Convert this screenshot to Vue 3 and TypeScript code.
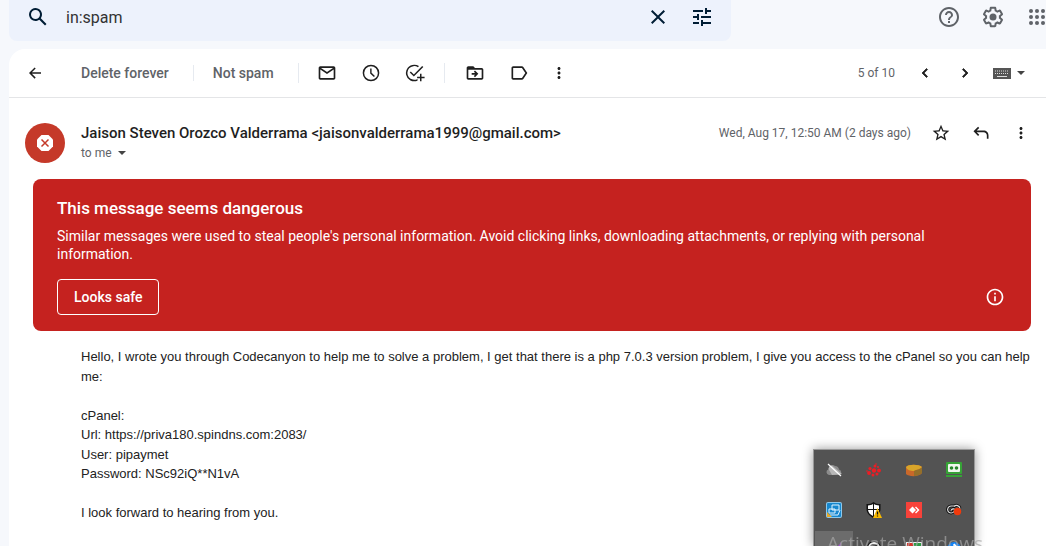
<script setup lang="ts">
import { ref } from 'vue'

interface Action {
  label: string
  path: string
}

const query = ref('in:spam')

const markActions: Action[] = [
  { label: 'Mark as unread', path: 'M20 4H4c-1.100 0-2 .9-2 2v12c0 1.100.9 2 2 2h16c1.100 0 2-.9 2-2V6c0-1.100-.9-2-2-2zm-.8 2L12 10.800 4.800 6h14.400zM4 18V7.870l8 5.330 8-5.330V18H4z' },
  { label: 'Snooze', path: 'M12 2a10 10 0 1 0 0 20 10 10 0 0 0 0-20zm0 18.200a8.200 8.200 0 1 1 0-16.400 8.200 8.200 0 0 1 0 16.400zM12.700 6.500H11v6l4.500 4.300 1.200-1.200-4-3.800z' },
  { label: 'Add to Tasks', path: 'M11 2a10 10 0 1 0 4 19.200v-2.100A8.200 8.200 0 1 1 15.500 5l1.300-1.300A10 10 0 0 0 11 2zM20.600 3.500l-10 10.200-3.600-3.600-1.300 1.300 4.900 4.900L22 4.900zM18 13v3.500h-3.500v1.800H18V22h1.800v-3.700h3.700v-1.800h-3.700V13z' },
]

const moveActions: Action[] = [
  { label: 'Move to', path: 'M20 6h-8l-2-2H4c-1.100 0-2 .9-2 2v12c0 1.100.9 2 2 2h16c1.100 0 2-.9 2-2V8c0-1.100-.9-2-2-2zm0 12H4V8h16v10zM12.160 12H8v2h4.160l-1.590 1.590L11.990 17 16 13.010 11.990 9l-1.410 1.410L12.160 12z' },
  { label: 'Labels', path: 'M3 6v12c0 1.100.9 2 2 2h10.500c.7 0 1.300-.3 1.700-.9L22 12l-4.800-7.100c-.4-.6-1-.9-1.700-.9H5c-1.100 0-2 .9-2 2zm2 0h10.500l4.100 6-4.100 6H5V6z' },
]

const more = 'M12 8c1.100 0 2-.9 2-2s-.9-2-2-2-2 .9-2 2 .9 2 2 2zm0 2c-1.100 0-2 .9-2 2s.9 2 2 2 2-.9 2-2-.9-2-2-2zm0 6c-1.100 0-2 .9-2 2s.9 2 2 2 2-.9 2-2-.9-2-2-2z'
const gridDots = [6, 12, 18]
</script>

<template>
  <div class="page">
    <header class="top">
      <form class="search" @submit.prevent>
        <button class="icon-btn wide" type="submit" aria-label="Search">
          <svg class="i24" viewBox="0 0 24 24"><path d="M20.500 19 14.800 13.300A6.500 6.500 0 1 0 13.300 14.800L19 20.500zM9.500 14a4.500 4.500 0 1 1 0-9 4.500 4.500 0 0 1 0 9z" /></svg>
        </button>
        <input v-model="query" class="query" type="text" aria-label="Search mail" />
        <button class="icon-btn" type="button" aria-label="Clear search">
          <svg class="i24" viewBox="0 0 24 24"><path d="M19 6.400 17.600 5 12 10.600 6.400 5 5 6.400l5.600 5.600L5 17.600 6.400 19l5.600-5.600 5.600 5.600 1.400-1.400-5.600-5.600z" /></svg>
        </button>
        <button class="icon-btn" type="button" aria-label="Show search options">
          <svg class="i24" viewBox="0 0 24 24"><path d="M3 17v2h6v-2H3zM3 5v2h10V5H3zm10 16v-2h8v-2h-8v-2h-2v6h2zM7 9v2H3v2h4v2h2V9H7zm14 4v-2H11v2h10zm-6-4h2V7h4V5h-4V3h-2v6z" /></svg>
        </button>
      </form>
      <nav class="top-icons">
        <button class="icon-btn" type="button" aria-label="Support">
          <svg class="i24" viewBox="0 0 24 24"><path d="M11 18h2v-2h-2v2zm1-16C6.480 2 2 6.480 2 12s4.480 10 10 10 10-4.480 10-10S17.520 2 12 2zm0 18c-4.410 0-8-3.590-8-8s3.590-8 8-8 8 3.590 8 8-3.590 8-8 8zm0-14c-2.210 0-4 1.790-4 4h2c0-1.100.9-2 2-2s2 .9 2 2c0 2-3 1.750-3 5h2c0-2.250 3-2.500 3-5 0-2.210-1.790-4-4-4z" /></svg>
        </button>
        <button class="icon-btn" type="button" aria-label="Settings">
          <svg class="i24" viewBox="0 0 24 24">
            <path d="M13.850 22.250h-3.700c-.74 0-1.360-.54-1.450-1.270l-.27-1.890c-.27-.14-.53-.29-.79-.46l-1.800.72c-.7.26-1.470-.03-1.810-.65L2.200 15.530c-.35-.66-.2-1.440.36-1.880l1.530-1.190c-.01-.15-.02-.3-.02-.46 0-.15.01-.31.02-.46l-1.520-1.190c-.59-.45-.74-1.260-.37-1.880l1.850-3.190c.34-.62 1.110-.9 1.790-.63l1.810.73c.26-.17.520-.32.780-.46l.27-1.910c.09-.7.710-1.250 1.440-1.250h3.700c.74 0 1.360.54 1.450 1.270l.27 1.890c.27.14.53.29.79.46l1.800-.72c.71-.26 1.480.03 1.820.65l1.840 3.180c.36.66.2 1.440-.36 1.880l-1.520 1.190c.01.15.02.3.02.46s-.01.31-.02.46l1.520 1.190c.56.45.72 1.230.37 1.860l-1.860 3.220c-.34.62-1.110.9-1.800.63l-1.800-.72c-.26.17-.52.32-.78.46l-.27 1.910c-.1.680-.72 1.220-1.460 1.220zm-3.230-2h2.760l.37-2.550.53-.22c.44-.18.88-.44 1.340-.78l.45-.34 2.380.96 1.380-2.400-2.030-1.580.07-.56c.03-.26.06-.51.06-.78s-.03-.53-.06-.78l-.07-.56 2.030-1.580-1.390-2.400-2.390.96-.45-.35c-.42-.32-.87-.58-1.330-.77l-.52-.22-.37-2.550h-2.760l-.37 2.550-.53.21c-.44.19-.88.44-1.340.79l-.45.33-2.380-.95-1.390 2.390 2.030 1.580-.07.560a7 7 0 0 0-.06.79c0 .26.02.53.06.78l.07.56-2.030 1.580 1.380 2.400 2.390-.96.45.35c.43.33.86.58 1.330.77l.53.22z" />
            <circle cx="12" cy="12" r="3.500" />
          </svg>
        </button>
        <button class="icon-btn" type="button" aria-label="Google apps">
          <svg class="i24" viewBox="0 0 24 24">
            <template v-for="y in gridDots" :key="y">
              <circle v-for="x in gridDots" :key="x" :cx="x" :cy="y" r="2" />
            </template>
          </svg>
        </button>
      </nav>
    </header>

    <main class="card">
      <div class="toolbar" role="toolbar" aria-label="Message actions">
        <button class="icon-btn" type="button" aria-label="Back to Spam">
          <svg class="i18" viewBox="0 0 24 24"><path d="M20 11H7.830l5.090-5.090L11.500 4.500 4 12l7.500 7.500 1.420-1.410L7.830 13H20z" /></svg>
        </button>
        <button class="text-btn delete" type="button">Delete forever</button>
        <button class="text-btn" type="button">Not spam</button>
        <div class="group">
          <button v-for="a in markActions" :key="a.label" class="icon-btn" type="button" :aria-label="a.label">
            <svg class="i20" viewBox="0 0 24 24"><path :d="a.path" /></svg>
          </button>
        </div>
        <div class="group">
          <button v-for="a in moveActions" :key="a.label" class="icon-btn" type="button" :aria-label="a.label">
            <svg class="i20" viewBox="0 0 24 24"><path :d="a.path" /></svg>
          </button>
          <button class="icon-btn narrow" type="button" aria-label="More">
            <svg class="i18" viewBox="0 0 24 24"><path :d="more" /></svg>
          </button>
        </div>
        <span class="count">5 of 10</span>
        <button class="icon-btn mid" type="button" aria-label="Newer">
          <svg class="i18" viewBox="0 0 24 24"><path d="M15.400 7.400 14 6l-6 6 6 6 1.400-1.400L10.800 12z" stroke="currentColor" /></svg>
        </button>
        <button class="icon-btn mid" type="button" aria-label="Older">
          <svg class="i18" viewBox="0 0 24 24"><path d="M8.600 16.600 10 18l6-6-6-6-1.400 1.400 4.600 4.600z" stroke="currentColor" /></svg>
        </button>
        <button class="keyboard" type="button" aria-label="Input tools">
          <svg class="kbd" viewBox="0 0 18 12">
            <rect width="18" height="11" y="1" fill="#555" />
            <path d="M2 4h14M2 6.500h14" stroke="#ddd" stroke-width="1" stroke-dasharray="1 1" />
            <path d="M4 9.500h10" stroke="#ddd" />
          </svg>
          <svg class="caret" viewBox="0 0 8 4"><path d="M0 0h8L4 4z" /></svg>
        </button>
      </div>

      <article>
        <div class="sender">
          <svg class="avatar" viewBox="0 0 40 40" role="img" aria-label="Dangerous sender">
            <circle cx="20" cy="20" r="20" fill="#c53929" />
            <path d="M16.500 12h7l4.500 4.500v7L23.500 28h-7L12 23.500v-7z" fill="#fff" />
            <path d="m16.500 16.500 7 7m0-7-7 7" stroke="#c53929" stroke-width="1.500" />
          </svg>
          <div class="who">
            <h1 class="name">Jaison Steven Orozco Valderrama &lt;jaisonvalderrama1999@gmail.com&gt;</h1>
            <button class="to" type="button">to me
              <svg class="caret" viewBox="0 0 8 4"><path d="M0 0h8L4 4z" /></svg>
            </button>
          </div>
          <time class="date" datetime="2022-08-17T00:50">Wed, Aug 17, 12:50 AM (2 days ago)</time>
          <div class="sender-actions">
            <button class="icon-btn mid" type="button" aria-label="Star">
              <svg class="i20" viewBox="0 0 24 24"><path d="m22 9.240-7.190-.62L12 2 9.190 8.630 2 9.240l5.460 4.730L5.820 21 12 17.270 18.180 21l-1.630-7.030L22 9.240zM12 15.400l-3.760 2.270 1-4.280-3.320-2.880 4.380-.38L12 6.100l1.710 4.040 4.380.38-3.320 2.880 1 4.280L12 15.400z" /></svg>
            </button>
            <button class="icon-btn mid" type="button" aria-label="Reply">
              <svg class="i20" viewBox="0 0 24 24"><path d="M8.500 4.500 3 10l5.500 5.500 1.400-1.400L6.800 11H15c2.500 0 4 1.500 4 4v4h2v-4c0-3.600-2.400-6-6-6H6.800l3.100-3.100z" /></svg>
            </button>
            <button class="icon-btn mid" type="button" aria-label="More">
              <svg class="i18" viewBox="0 0 24 24"><path :d="more" /></svg>
            </button>
          </div>
        </div>

        <section class="banner">
          <h2>This message seems dangerous</h2>
          <p>Similar messages were used to steal people's personal information. Avoid clicking links, downloading attachments, or replying with personal information.</p>
          <div class="banner-foot">
            <button class="safe" type="button">Looks safe</button>
            <button class="info" type="button" aria-label="Why this message is marked as dangerous">
              <svg class="i20" viewBox="0 0 24 24"><path d="M11 7h2v2h-2zm0 4h2v6h-2zm1-9C6.480 2 2 6.480 2 12s4.480 10 10 10 10-4.480 10-10S17.520 2 12 2zm0 18c-4.410 0-8-3.590-8-8s3.590-8 8-8 8 3.590 8 8-3.590 8-8 8z" /></svg>
            </button>
          </div>
        </section>

        <div class="message">
          <p>Hello, I wrote you through Codecanyon to help me to solve a problem, I get that there is a php 7.0.3 version problem, I give you access to the cPanel so you can help me:</p>
          <p>cPanel:<br />Url: https://priva180.spindns.com:2083/<br />User: pipaymet<br />Password: NSc92iQ**N1vA</p>
          <p>I look forward to hearing from you.</p>
        </div>
      </article>
    </main>

    <aside class="tray" aria-label="Hidden notification icons">
      <span class="cell"><svg viewBox="0 0 16 16">
        <path d="M3 13a3 3 0 0 1-.5-5.800A4 4 0 0 1 9 4a4 4 0 0 1 4 3.500A2.800 2.800 0 0 1 13 13z" fill="#8c8c8c" />
        <path d="M6 13 2.500 7A4 4 0 0 1 6 3.500L16 12z" fill="#b8b8b8" />
        <path d="m2 2 13 12" stroke="#fff" stroke-width="1.200" />
      </svg></span>
      <span class="cell"><svg viewBox="0 0 16 16"><g fill="#ed1c24">
        <circle cx="8" cy="8.500" r="2.200" /><circle cx="4" cy="6.500" r="1.600" /><circle cx="9" cy="4" r="1.500" />
        <circle cx="13" cy="8.500" r="1.900" /><circle cx="3" cy="11" r="1.900" /><circle cx="7" cy="13" r="1.500" />
        <circle cx="11" cy="12" r="1.500" /><circle cx="12" cy="5" r="1" /><circle cx="10" cy="2" r=".8" /><circle cx="1" cy="9" r=".8" />
      </g></svg></span>
      <span class="cell"><svg viewBox="0 0 16 16">
        <path d="M0 5c2-3 13-3 16 0v6c-3 4-13 4-16 1z" fill="#c9682a" />
        <path d="M0 5c2-3 13-3 16 0-2 3-5 2-8 4-4 0-7-1-8-4z" fill="#d9a52a" />
        <path d="M8 9c3-2 6-1 8-4v6c-2 2-5 3-8 3z" fill="#94702a" />
      </svg></span>
      <span class="cell"><svg viewBox="0 0 16 16">
        <rect width="16" height="12" rx="1" fill="#36a336" /><rect x="2" y="2" width="12" height="8" rx="1" fill="#f0f7ee" />
        <circle cx="5.500" cy="6" r="1.800" fill="#27852b" /><circle cx="10.500" cy="6" r="1.800" fill="#27852b" />
        <path d="M0 14h16" stroke="#36a336" stroke-width="2" />
      </svg></span>
      <span class="cell"><svg viewBox="0 0 16 16">
        <rect width="16" height="16" rx="2" fill="#8dc9ec" /><rect x="1" y="1" width="14" height="14" rx="1" fill="#1687ce" />
        <path d="M6 3h7v5H6zM3 7h6v4H3zM4 13h8l2-5" fill="none" stroke="#dff3ff" />
        <path d="M1 10v5h5z" fill="#e5a82b" />
      </svg></span>
      <span class="cell"><svg viewBox="0 0 16 16">
        <path d="M7.500 0c2 1.700 4 2 7 2v5c0 4-3 7-7 9-4-2-7-5-7-9V2c3 0 5-.3 7-2z" fill="#111" />
        <path d="M7 2v5H2V3.500C4 3.400 5.500 3 7 2zm1 0c1.500 1 3 1.400 5 1.500V7H8zM2 8h5v6C4 12.500 2.300 10.500 2 8zm6 0h5c-.3 2.500-2 4.500-5 6z" fill="#fff" />
        <path d="m11.500 6 4.500 10H7z" fill="#f8b900" /><path d="M11.500 9.500v3m0 1v1" stroke="#111" stroke-width="1.300" />
      </svg></span>
      <span class="cell"><svg viewBox="0 0 16 16">
        <rect width="16" height="16" fill="#f8423a" />
        <path d="m6.500 4.500 3.500 3.500-3.500 3.500L3 8z" fill="#fff" /><path d="M9 5.500 11.500 8 9 10.500l1 1L13.500 8 10 4.500z" fill="#fff" />
      </svg></span>
      <span class="cell"><svg viewBox="0 0 16 16">
        <g fill="none"><path d="M9 4H5a3.500 3.500 0 1 0 3 5.500M5 8.500c1-2 3-2 4-1m-1-3a3.500 3.500 0 0 1 6 2" stroke="#111" stroke-width="3" />
        <path d="M9 4H5a3.500 3.500 0 1 0 3 5.500M5 8.500c1-2 3-2 4-1m-1-3a3.500 3.500 0 0 1 6 2" stroke="#ddd" stroke-width="1.200" /></g>
        <circle cx="11.500" cy="9.500" r="3.700" fill="#f03a0c" />
      </svg></span>
      <span class="cell active"><svg viewBox="0 0 16 16"><path d="M7 6c3 0 6-2 8-6l-1 8-5 4z" fill="#a14fd0" /></svg></span>
      <span class="cell"><svg viewBox="0 0 16 16"><g fill="none"><path d="M3 6a5 5 0 0 1 10 0" stroke="#111" stroke-width="4" /><path d="M3 6a5 5 0 0 1 10 0" stroke="#eee" stroke-width="2" /></g></svg></span>
      <span class="cell"><svg viewBox="0 0 16 16"><path d="M0 0h16v15H0z" fill="#eee" /><path d="M1 1h6v6H1z" fill="#d8342a" /><path d="M8 1h7v6H8z" fill="#2d9a45" /></svg></span>
      <span class="cell"><svg viewBox="0 0 16 16"><circle cx="8" cy="7" r="7" fill="#1684f5" /><path d="M8 2v12M5 5l6 6m-6 0 6-6-3-3" fill="none" stroke="#fff" stroke-width="1.300" /></svg></span>
    </aside>
    <div class="watermark">Activate Windows</div>
  </div>
</template>

<style>
body {
  margin: 0;
  overflow: hidden;
}
</style>

<style scoped>
.page {
  display: flex;
  flex-direction: column;
  min-height: 100vh;
  background: #f6f8fc;
  color: #1f1f1f;
  font-family: Roboto, "Liberation Sans", sans-serif;
  font-size: 14px;
}
button {
  padding: 0;
  border: 0;
  background: none;
  color: inherit;
  font: inherit;
  cursor: pointer;
}
svg {
  display: block;
  flex: none;
  fill: currentColor;
}
h1, h2, p {
  margin: 0;
}
.i24 { width: 24px; height: 24px; }
.i20 { width: 20px; height: 20px; }
.i18 { width: 18px; height: 18px; }
.caret { width: 8px; height: 4px; color: #444; }
.icon-btn {
  display: flex;
  flex: none;
  align-items: center;
  justify-content: center;
  width: 44px;
  height: 40px;
}
.icon-btn.wide { width: 57px; }
.icon-btn.mid { width: 40px; }
.icon-btn.narrow { width: 36px; }
.top {
  display: flex;
  justify-content: space-between;
  padding: 0 0 8px 9px;
  overflow: hidden;
}
.search {
  display: flex;
  flex: 0 1 722px;
  align-items: center;
  box-sizing: border-box;
  height: 48px;
  margin-top: -7px;
  padding-right: 7px;
  border-radius: 8px;
  background: #edf2fc;
  color: #001d35;
}
.query {
  flex: 1;
  min-width: 0;
  padding: 0;
  border: 0;
  outline: 0;
  background: none;
  color: #333;
  font: 16px Roboto, "Liberation Sans", sans-serif;
}
.top-icons {
  display: flex;
  align-items: center;
  height: 48px;
  margin: -7px -13px 0 0;
  color: #5f6368;
}
.card {
  flex: 1;
  border-top-left-radius: 16px;
  margin-left: 9px;
  background: #fff;
}
.toolbar {
  display: flex;
  align-items: center;
  height: 48px;
  padding: 0 18px 0 4px;
  border-bottom: 1px solid #e4e5e7;
}
.text-btn {
  padding: 0 24px 0 20px;
  color: #5f6368;
  font-weight: 500;
}
.delete { margin-left: 4px; }
.group {
  display: flex;
  align-items: center;
  padding: 0 7px;
}
.text-btn + .text-btn,
.group {
  background: linear-gradient(#e6eaf0, #e6eaf0) left center / 1px 20px no-repeat;
}
.group + .group { padding-left: 9px; }
.count {
  margin: 0 10px 0 auto;
  color: #5f6368;
  font-size: 12px;
}
.keyboard {
  display: flex;
  align-items: center;
  gap: 6px;
  padding: 0 3px 0 8px;
}
.kbd { width: 18px; height: 12px; }
.sender {
  display: flex;
  align-items: flex-start;
  padding: 25px 5px 0 16px;
}
.avatar { width: 40px; height: 40px; }
.who {
  flex: 1;
  min-width: 0;
  margin-left: 16px;
}
.name {
  font-size: 15px;
  font-weight: 500;
  line-height: 20px;
}
.to {
  display: flex;
  align-items: center;
  gap: 6px;
  color: #5f6368;
  font-size: 12px;
  line-height: 20px;
}
.date {
  margin-right: 10px;
  color: #5f6368;
  font-size: 12px;
  line-height: 20px;
}
.sender-actions {
  display: flex;
  align-items: center;
  height: 20px;
}
.banner {
  margin: 16px 15px 0 24px;
  padding: 16px 24px;
  border-radius: 8px;
  background: #c5221f;
  color: #fff;
}
.banner h2 {
  font-size: 17px;
  font-weight: 500;
  line-height: 26px;
}
.banner p {
  margin: 6px 0 16px;
  padding-right: 48px;
  line-height: 18px;
}
.banner-foot {
  display: flex;
  align-items: center;
  justify-content: space-between;
}
.safe {
  height: 36px;
  padding: 0 16px;
  border: 1px solid #fff;
  border-radius: 4px;
  font-weight: 500;
}
.info { padding: 2px; }
.message {
  padding: 16px 15px 16px 72px;
  color: #222;
  font-family: "Liberation Sans", Arial, sans-serif;
  font-size: 13px;
  line-height: 1.5;
}
.message p + p { margin-top: 1.5em; }
.tray {
  position: fixed;
  right: 71px;
  bottom: 0;
  display: grid;
  grid-template-columns: repeat(4, 40px);
  grid-template-rows: 40px 40px 16px;
  clip-path: inset(-12px -12px 0 -12px);
  border: 1px solid #999;
  border-bottom: 0;
  background: #535353;
  box-shadow: 0 0 10px rgba(0, 0, 0, 0.4);
}
.cell {
  display: flex;
  align-items: flex-start;
  justify-content: center;
  padding-top: 12px;
}
.cell svg { width: 16px; height: 16px; }
.cell.active {
  background: linear-gradient(#6c6c6c, #6c6c6c) 1px 1px / 38px 38px no-repeat;
}
.watermark {
  position: fixed;
  right: 63px;
  bottom: -11px;
  color: rgba(165, 165, 165, 0.7);
  font-family: "Open Sans", "Noto Sans", sans-serif;
  font-size: 19px;
  line-height: 28px;
  white-space: nowrap;
  pointer-events: none;
}
</style>
